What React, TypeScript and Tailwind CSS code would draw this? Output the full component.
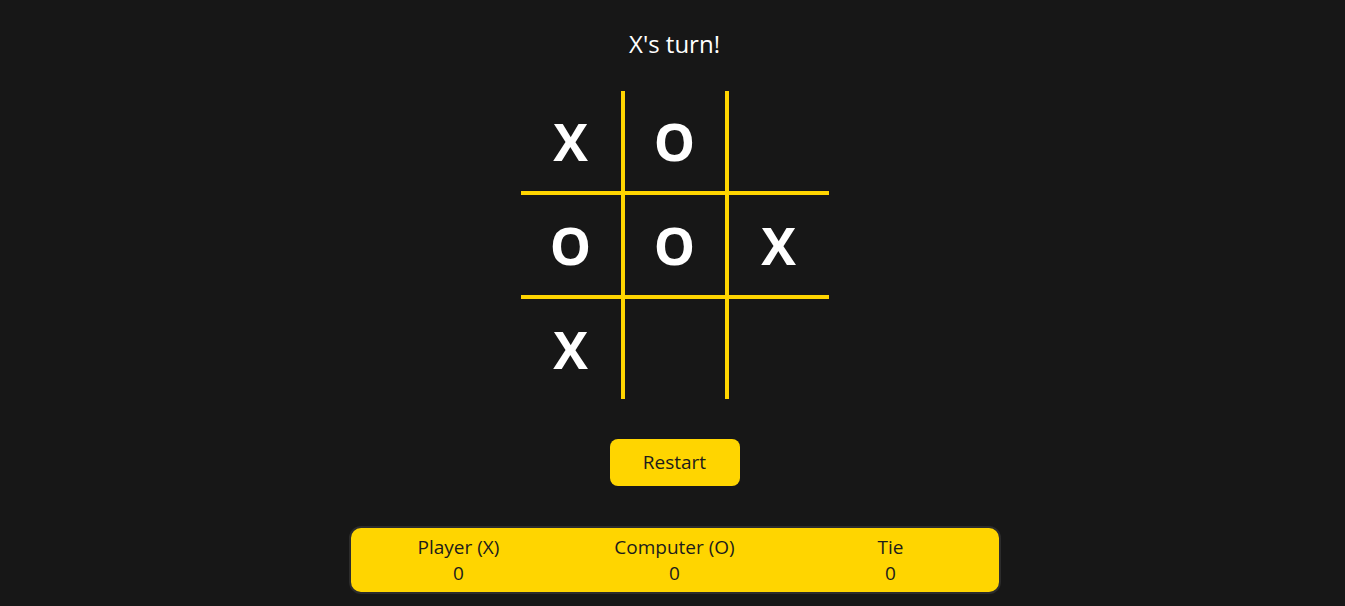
import React from 'react';

const board = ['X', 'O', '', 'O', 'O', 'X', 'X', '', ''];

const App = () => {
  return (
    <div
      className="min-h-screen bg-[#171717] flex flex-col items-center pt-[26px] pl-[4px]"
      style={{ fontFamily: '"Open Sans", sans-serif' }}
    >
      {/* Status */}
      <h1 className="text-white text-[24px] leading-[36px] font-medium">X's turn!</h1>

      {/* Board */}
      <div className="grid grid-cols-[104px_104px_100px] grid-rows-[104px_104px_100px] mt-[29px]">
        {board.map((v, i) => {
          const col = i % 3;
          const row = Math.floor(i / 3);
          return (
            <div
              key={i}
              className={`flex items-center justify-center text-white text-[52px] font-bold border-[#ffd500] ${
                col < 2 ? 'border-r-4' : ''
              } ${row < 2 ? 'border-b-4' : ''}`}
            >
              {v}
            </div>
          );
        })}
      </div>

      {/* Restart */}
      <button className="mt-[40px] w-[130px] h-[47px] rounded-lg bg-[#ffd500] text-[#1c1c1c] text-[19px]">
        Restart
      </button>

      {/* Score */}
      <div className="mt-[40px] w-[652px] rounded-xl border-2 border-[#2c2c2c] bg-[#ffd500] grid grid-cols-3 py-[6px] text-[#1c1c1c] text-[19px] leading-[26px] text-center">
        <div>
          <div>Player (X)</div>
          <div>0</div>
        </div>
        <div>
          <div>Computer (O)</div>
          <div>0</div>
        </div>
        <div>
          <div>Tie</div>
          <div>0</div>
        </div>
      </div>
    </div>
  );
};

export default App;
